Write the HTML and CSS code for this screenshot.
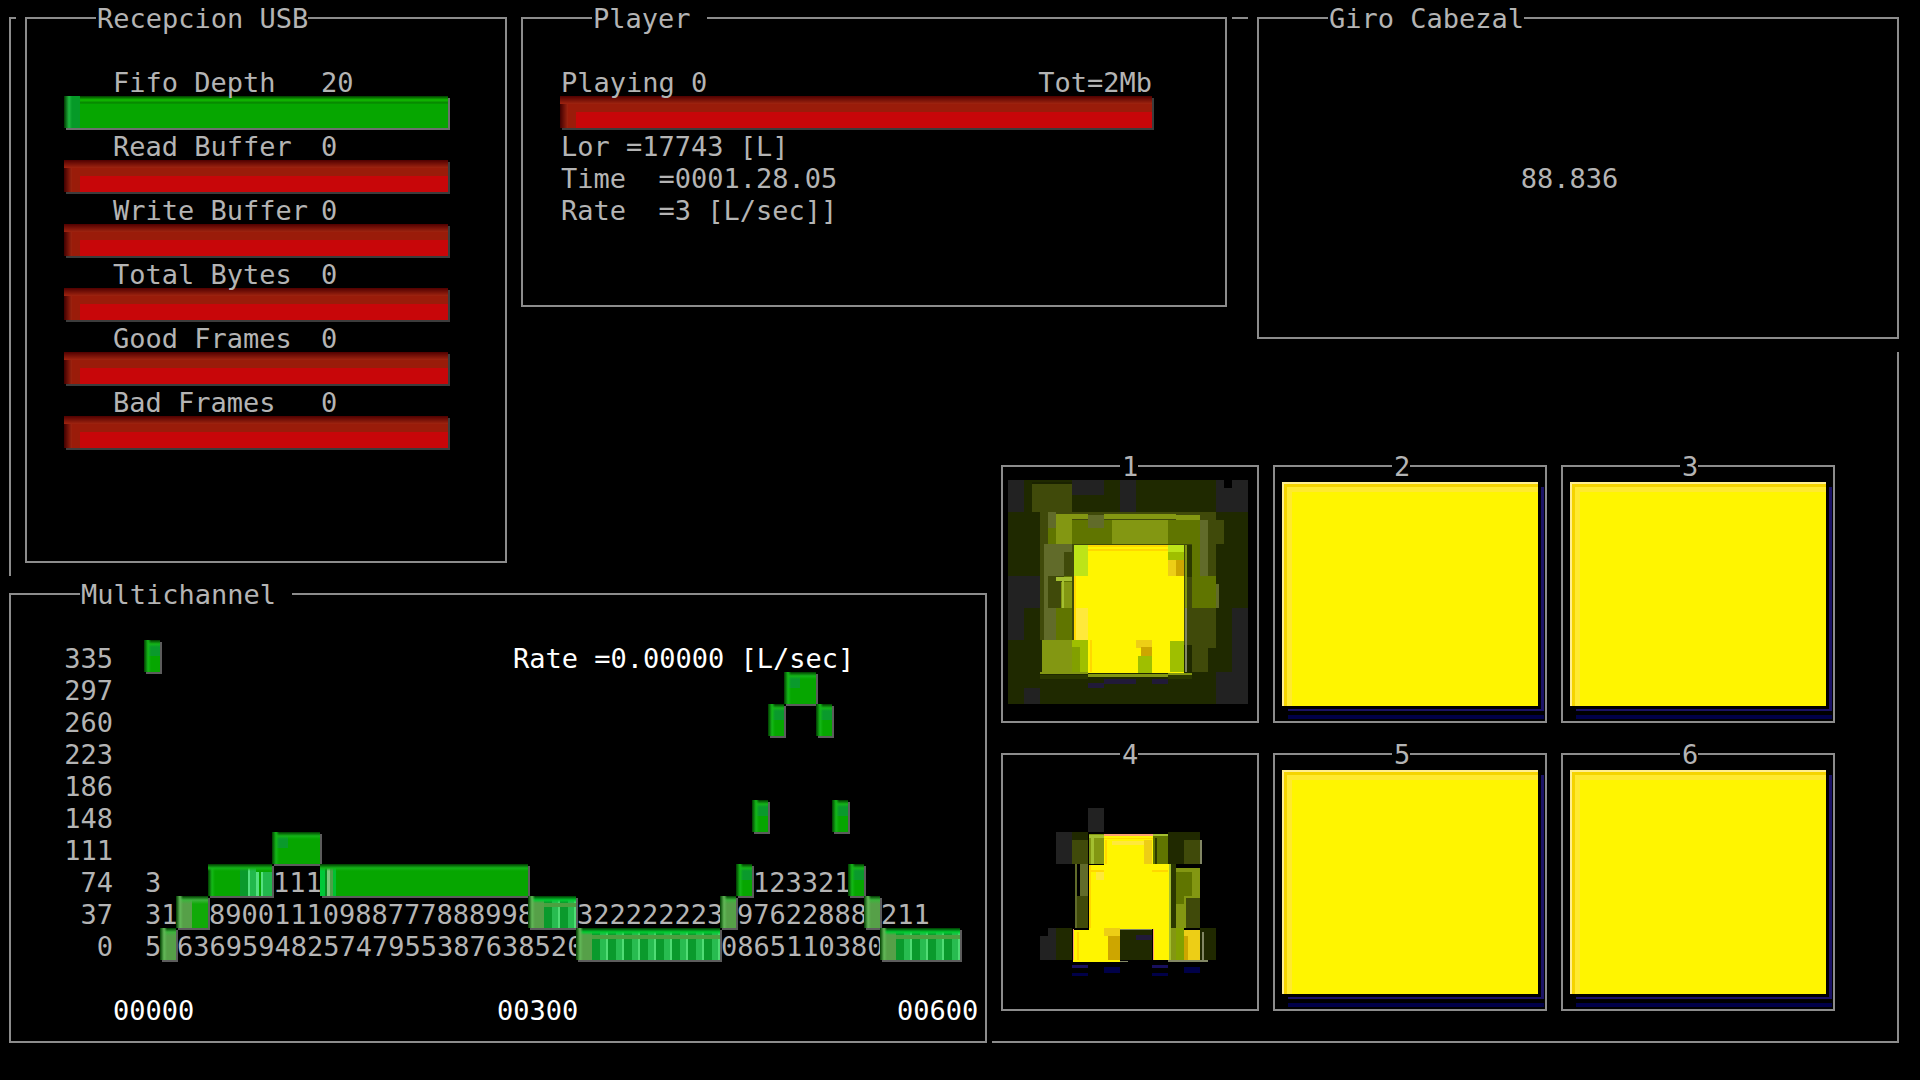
FILE: index.html
```html
<!DOCTYPE html>
<html lang="es">
<head>
<meta charset="utf-8">
<meta name="viewport" content="width=device-width, initial-scale=1">
<title>Recepcion USB</title>
<link rel="stylesheet" href="styles.css">
</head>
<body>
<main class="screen">
  <div class="cell outer"><div class="frame"></div></div>

  <section class="cell reception">
    <fieldset class="frame">
      <legend>Recepcion USB</legend>
      <div class="body meters">
        <div class="line meter-text"><span>Fifo Depth</span><span>20</span></div>
        <div class="bar bar-ok"></div>
        <div class="line meter-text"><span>Read Buffer</span><span>0</span></div>
        <div class="bar"></div>
        <div class="line meter-text"><span>Write Buffer</span><span>0</span></div>
        <div class="bar"></div>
        <div class="line meter-text"><span>Total Bytes</span><span>0</span></div>
        <div class="bar"></div>
        <div class="line meter-text"><span>Good Frames</span><span>0</span></div>
        <div class="bar"></div>
        <div class="line meter-text"><span>Bad Frames</span><span>0</span></div>
        <div class="bar"></div>
      </div>
    </fieldset>
  </section>

  <section class="cell player">
    <fieldset class="frame">
      <legend>Player </legend>
      <div class="body track">
        <div class="line spread"><span>Playing 0</span><span>Tot=2Mb</span></div>
        <div class="bar"></div>
        <div class="line">Lor =17743 [L]</div>
        <div class="line">Time  =0001.28.05</div>
        <div class="line">Rate  =3 [L/sec]]</div>
      </div>
    </fieldset>
  </section>

  <section class="cell heading">
    <fieldset class="frame">
      <legend>Giro Cabezal</legend>
      <div class="body angle"><div class="line">88.836</div></div>
    </fieldset>
  </section>

  <section class="cell multichannel">
    <fieldset class="frame">
      <legend>Multichannel </legend>
      <div class="body chart">
        <div class="chart-row"><span class="line tick">335</span>
          <div class="plot"><i class="block" style="grid-column:1"></i><span class="line strong" style="grid-column:24/span 21">Rate =0.00000 [L/sec]</span></div></div>
        <div class="chart-row"><span class="line tick">297</span>
          <div class="plot"><i class="block" style="grid-column:41/span 2"></i></div></div>
        <div class="chart-row"><span class="line tick">260</span>
          <div class="plot"><i class="block" style="grid-column:40"></i><i class="block" style="grid-column:43"></i></div></div>
        <div class="chart-row"><span class="line tick">223</span><div class="plot"></div></div>
        <div class="chart-row"><span class="line tick">186</span><div class="plot"></div></div>
        <div class="chart-row"><span class="line tick">148</span>
          <div class="plot"><i class="block" style="grid-column:39"></i><i class="block" style="grid-column:44"></i></div></div>
        <div class="chart-row"><span class="line tick">111</span>
          <div class="plot"><i class="block" style="grid-column:9/span 3"></i></div></div>
        <div class="chart-row"><span class="line tick">74</span>
          <div class="plot"><span class="line" style="grid-column:1">3</span><i class="block streak-end" style="grid-column:5/span 4"></i><span class="line" style="grid-column:9/span 3">111</span><i class="block streak-start" style="grid-column:12/span 13"></i><i class="block" style="grid-column:38"></i><span class="line" style="grid-column:39/span 6">123321</span><i class="block" style="grid-column:45"></i></div></div>
        <div class="chart-row"><span class="line tick">37</span>
          <div class="plot"><span class="line" style="grid-column:1/span 2">31</span><i class="block muted" style="grid-column:3/span 2"></i><span class="line" style="grid-column:5/span 20">89001110988777888998</span><i class="block muted noisy" style="grid-column:25/span 3"></i><span class="line" style="grid-column:28/span 9">322222223</span><i class="block muted" style="grid-column:37"></i><span class="line" style="grid-column:38/span 8">97622888</span><i class="block muted" style="grid-column:46"></i><span class="line" style="grid-column:47/span 3">211</span></div></div>
        <div class="chart-row"><span class="line tick">0</span>
          <div class="plot"><span class="line" style="grid-column:1">5</span><i class="block muted" style="grid-column:2"></i><span class="line" style="grid-column:3/span 25">6369594825747955387638520</span><i class="block muted noisy" style="grid-column:28/span 9"></i><span class="line" style="grid-column:37/span 10">0865110380</span><i class="block muted noisy" style="grid-column:47/span 5"></i></div></div>
        <div class="axis strong"><span class="line">00000</span><span class="line">00300</span><span class="line">00600</span></div>
      </div>
    </fieldset>
  </section>

  <section class="channels">
    <div class="cell"><fieldset class="frame"><legend>1</legend>
      <svg class="map" viewBox="54 90 720 672" preserveAspectRatio="none" shape-rendering="crispEdges" aria-hidden="true">
        <path fill="#1f2900" d="M54 90h720v672H54z"/>
        <path fill="#222" d="M54 90h48v96H54zM246 90h96v46h-96zM390 90h48v96h-48zM678 90h96v96h-96zM54 378h96v96H54zM54 474h48v96H54zM726 474h48v288h-96v-96h48zM102 714h48v48h-48z"/>
        <path fill="#000" d="M702 90h24v24h-24z"/>
        <path fill="#404a0a" d="M126 102h120v84H126zM150 186h528v24h24v72h-24v312h-24v72H606v-80l-456-16z"/>
        <path fill="#1a2200" d="M126 96h120v6H126z"/>
        <path fill="#607500" d="M174 210h456v168h48v96H606V282H246v288h-48V474h24v-96h24v-96H174z"/>
        <path fill="#616b2a" d="M174 186h24v48h-24zM294 196h48v38h-48zM630 210h24v168h-24zM162 282h84v24h-24v72h-60zM162 378h12v192h-12zM174 474h24v96h-24zM678 402h8v72h-8z"/>
        <path fill="#404a0a" d="M222 306h24v72h-24zM174 378h24v96h-24z"/>
        <path fill="#839712" d="M198 192h48v90h-48zM366 210h168v72H366zM198 192h96v16h-96zM342 192h216v16H342zM558 196h72v14h-72zM212 396h34v78h-34zM156 570h90v96h-90z"/>
        <path fill="#a4bf30" d="M198 380h48v12h-24v82h-6v-82h-18z"/>
        <path fill="#fff500" d="M252 286h330v384H294v-96h-42z"/>
        <path fill="#ffd800" d="M294 286h240v6H294zM252 378h6v192h-6zM294 298h240v4H294zM300 570h6v96h-6z"/>
        <path fill="#bde418" d="M252 286h42v92h-42zM534 286h48v20h-48z"/>
        <path fill="#edce16" d="M534 330h24v48h-24zM438 570h48v24h-48z"/>
        <path fill="#cda600" d="M558 330h24v48h-24zM454 590h32v28h-32z"/>
        <path fill="#9fbf00" d="M534 306h48v24h-48zM246 570h48v96h-48zM444 618h42v50h-42zM540 572h42v94h-42z"/>
        <path fill="#82a000" d="M246 590h24v76h-24z"/>
        <path fill="#ffe93b" d="M258 474h36v96h-36z"/>
        <path fill="#839712" d="M584 286h8v188h-8zM150 666h144v6H150zM294 672h240v10H294zM534 668h72v6h-72z"/>
        <path fill="#2b3800" d="M592 286h14v96h-14zM150 676h144v10H150zM534 676h72v10h-72z"/>
        <path fill="#828764" d="M584 474h8v192h-8z"/>
        <path fill="#211a38" d="M294 700h48v14h-48zM342 688h96v14h-96zM486 688h48v14h-48z"/>
      </svg></fieldset></div>
    <div class="cell"><fieldset class="frame"><legend>2</legend><div class="full"></div></fieldset></div>
    <div class="cell"><fieldset class="frame"><legend>3</legend><div class="full"></div></fieldset></div>
    <div class="cell"><fieldset class="frame"><legend>4</legend>
      <svg class="map" viewBox="54 99 720 672" preserveAspectRatio="none" shape-rendering="crispEdges" aria-hidden="true">
        <path fill="#222" d="M294 219h48v72h-48zM198 291h48v96h-48zM174 579h24v96h-48v-72h24z"/>
        <path fill="#202900" d="M246 291h48v24h-48zM534 291h96v96h-96zM198 579h48v96h-48zM390 585h96v90h-96zM630 579h48v96h-48z"/>
        <path fill="#404a0a" d="M246 315h48v72h-48zM582 315h48v72h-48zM254 483h40v96h-40zM582 483h48v96h-48z"/>
        <path fill="#616b2a" d="M254 387h8v192h-8zM270 387h24v96h-24z"/>
        <path fill="#839712" d="M298 296h44v91h-44zM558 400h72v90h-72zM558 483h30v96h-30zM534 387h24v288h-24z"/>
        <path fill="#a4bf30" d="M304 300h8v87h-8zM536 387h6v288h-6zM298 300h44v8h-44zM488 296h46v8h-46z"/>
        <path fill="#607500" d="M488 304h46v83h-46zM558 410h48v73h-24v24h-24z"/>
        <path fill="#2b3800" d="M494 310h8v77h-8zM544 387h14v192h-14z"/>
        <path fill="#fff500" d="M342 297h146v90h48v288h-48v-92h-98v97H248v-96h50V390h44z"/>
        <path fill="#ffa070" d="M342 297h146v5H342zM248 583h5v92h-5zM488 583h4v92h-4z"/>
        <path fill="#ffd800" d="M342 308h146v5H342zM346 315h5v72h-5zM298 390h5v189h-5zM298 406h44v4h-44zM486 406h48v4h-48zM262 590h5v85h-5z"/>
        <path fill="#ffe93b" d="M366 317h96v14h-96zM318 410h24v24h-24z"/>
        <path fill="#edce16" d="M462 315h24v72h-24zM342 579h48v24h-48zM582 585h48v90h-48z"/>
        <path fill="#cda600" d="M354 603h36v72h-36zM582 603h12v72h-12z"/>
        <path fill="#82a000" d="M558 579h24v96h-24z"/>
        <path fill="#828764" d="M390 581h96v4h-96zM630 315h5v72h-5zM390 677h24v5h-24zM534 676h120v5H534zM636 590h6v85h-6z"/>
        <path fill="#211a38" d="M438 601h48v14h-48z"/>
        <path fill="#18105e" d="M246 690h48v8h-48zM486 690h48v8h-48z"/>
        <path fill="#000048" d="M342 697h48v16h-48zM582 697h48v16h-48zM246 715h48v8h-48zM486 715h48v8h-48z"/>
      </svg></fieldset></div>
    <div class="cell"><fieldset class="frame"><legend>5</legend><div class="full"></div></fieldset></div>
    <div class="cell"><fieldset class="frame"><legend>6</legend><div class="full"></div></fieldset></div>
  </section>
</main>
</body>
</html>
```
FILE: styles.css
```css
* { box-sizing: border-box; }

body {
  margin: 0;
  background: #000;
  color: #b4b4b4;
  font: 27px/32px "DejaVu Sans Mono", "Liberation Mono", monospace;
}

/* Column and row tracks count terminal character cells. */
.screen {
  display: grid;
  grid-template-columns:
    minmax(0, 1fr) minmax(0, 31fr) minmax(0, 30fr) minmax(0, 15fr)
    minmax(0, 1fr) minmax(0, 41fr) minmax(0, 1fr);
  grid-template-rows:
    minmax(320px, auto) minmax(32px, auto) minmax(96px, auto)
    minmax(128px, auto) minmax(480px, auto);
}

.cell {
  display: grid;
  min-width: 0;
  padding: 4px 5px 13px 9px;
  background: #000;
}

.frame {
  min-width: 0;
  margin: 0;
  padding: 0;
  border: 2px solid #8c8c8c;
}

legend {
  height: 28px;
  margin-left: 69px;
  padding: 0 0 0 1px;
  line-height: 30px;
  white-space: pre;
}

.outer { grid-area: 1 / 1 / 6 / 7; padding-top: 17px; }
.reception { grid-area: 1 / 2 / 5 / 3; }
.player { grid-area: 1 / 3 / 2 / 5; }
.heading { grid-area: 1 / 6 / 3 / 7; }
.multichannel { grid-area: 5 / 1 / 6 / 4; }
.channels { grid-area: 4 / 4 / 6 / 7; }

.body { padding-top: 32px; }

.line {
  display: block;
  height: 32px;
  padding-left: 1px;
  line-height: 38px;
  white-space: pre;
}

.meters { padding-left: 37px; padding-right: 57px; }
.meter-text { display: grid; grid-template-columns: 208px auto; padding-left: 49px; }
.track { padding-left: 37px; padding-right: 73px; }
.spread { display: flex; justify-content: space-between; }
.angle { padding-top: 128px; padding-right: 18px; text-align: center; }

.bar {
  height: 32px;
  background:
    linear-gradient(#c80609, #c80609) 16px 16px no-repeat,
    linear-gradient(#500000, #a02410) 0 0 / 100% 8px no-repeat,
    linear-gradient(90deg, #400000, #a02410) 0 0 / 8px 100% no-repeat,
    #9a1c0a;
  box-shadow: 2px 2px #3c3c3c;
}

.bar-ok {
  background:
    linear-gradient(90deg, #003800, #20b840 5px, #069a28 8px) 0 0 / 16px 100% no-repeat,
    linear-gradient(#003c00, #12bc00 4px, #058000 7px, #06a600 8px);
  box-shadow: 2px 2px #6e6e6e;
}

.chart-row {
  display: grid;
  grid-template-columns: 102px minmax(0, 1fr);
  column-gap: 31px;
  padding-right: 25px;
}

.tick { text-align: right; }

.plot {
  display: grid;
  grid-template-columns: repeat(51, minmax(0, 1fr));
  grid-template-rows: 32px;
}

.block {
  background:
    linear-gradient(90deg, #003c00, #14b818 4px, transparent 7px),
    linear-gradient(#003c00, #14b418 4px, transparent 7px),
    linear-gradient(#0a9a2c, #0a9a2c) 0 0 / 16px 16px no-repeat,
    #06a600;
  box-shadow: 2px 2px #5c5c5c;
}

.streak-end {
  background:
    linear-gradient(#003c00, #14b418 4px, transparent 7px),
    linear-gradient(90deg, #55e080 3px, transparent 3px 5px, #55e080 5px 7px, #22b84c 7px) right bottom / 16px 24px no-repeat,
    linear-gradient(90deg, #0a9a2c 8px, #55e080 8px 10px, #22b84c 10px) right 16px bottom / 16px 100% no-repeat,
    linear-gradient(90deg, #003c00, #14b818 4px, #06a600 7px);
}

.streak-start {
  background:
    linear-gradient(#003c00, #14b418 4px, transparent 7px),
    linear-gradient(90deg, #00c838 5px, #0a8a20 5px 7px, #80c880 7px 10px, #4ca048 10px 13px, #00c030 13px) 0 0 / 16px 100% no-repeat,
    #06a600;
}

.muted {
  background:
    linear-gradient(90deg, #003c00, #62b858 4px, transparent 7px),
    linear-gradient(#003c00, #3cb43c 4px, transparent 8px),
    linear-gradient(#56a048, #56a048) 0 0 / 16px 100% no-repeat,
    #10aa08;
}

.noisy {
  background:
    linear-gradient(90deg, #003c00, #62b858 4px, transparent 7px),
    linear-gradient(#003c00, #00cc30 4px, transparent 7px),
    linear-gradient(#56a048, #56a048) 0 0 / 16px 100% no-repeat,
    linear-gradient(#4ca040, #4ca040) 0 7px / 100% 4px no-repeat,
    repeating-linear-gradient(90deg, #0a9a2c 0 8px, #28bc50 8px 14px, #50dc74 14px 16px);
}

.strong { color: #fff; }

.axis {
  display: grid;
  grid-template-columns: minmax(0, 24fr) minmax(0, 25fr) minmax(0, 5fr);
  padding: 32px 9px 0 101px;
}

.channels {
  display: grid;
  grid-template-columns: minmax(0, 17fr) minmax(0, 18fr) minmax(0, 18fr) minmax(0, 4fr);
  grid-template-rows: 288px 288px;
}
.channels .cell:nth-child(3n + 1) { grid-column: 1; }
.channels .cell { background: none; }
.channels legend { margin-left: 117px; padding-left: 2px; }

.map {
  display: block;
  width: calc(100% - 14px);
  height: 224px;
  margin-left: 5px;
}

.full {
  height: 224px;
  margin: 2px 7px 0;
  background: #fff500;
  border: solid #ffee90;
  border-width: 2px 0 0 2px;
  box-shadow:
    inset 3px 3px #f5d400,
    inset 8px 8px #ffea30,
    3px 3px #000,
    6px 5px #1a1266,
    6px 9px #000,
    6px 13px #000048;
}
```
